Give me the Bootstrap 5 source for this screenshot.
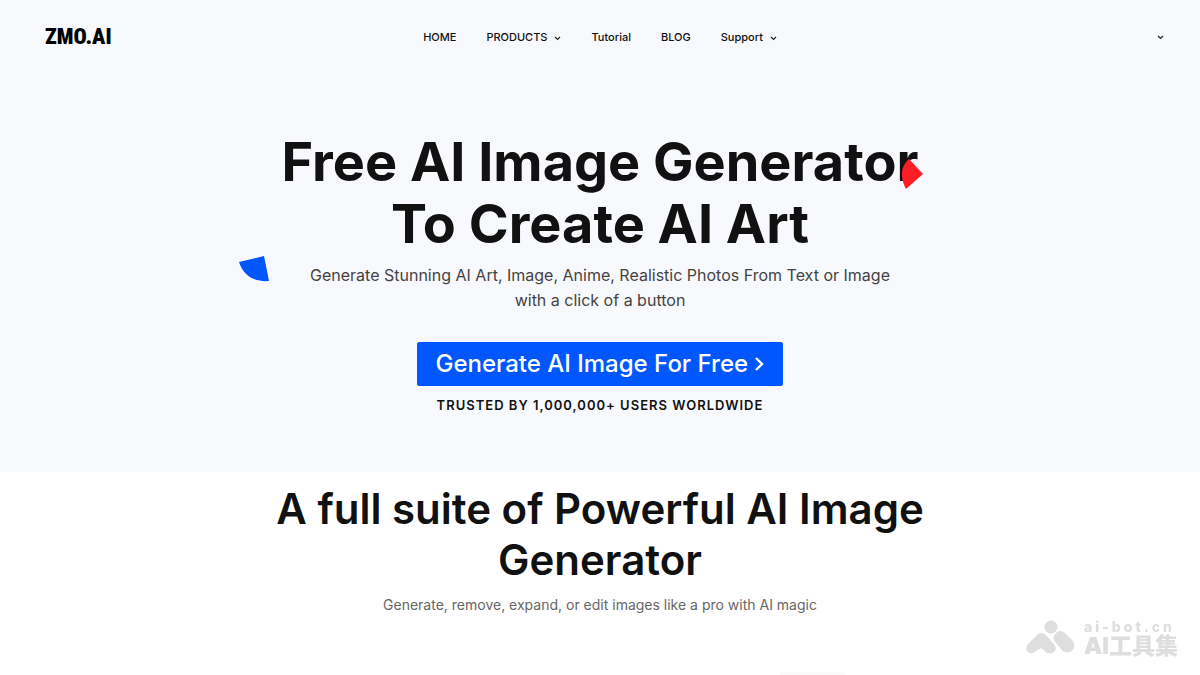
<!DOCTYPE html>
<html lang="en">
<head>
<meta charset="utf-8">
<meta name="viewport" content="width=device-width, initial-scale=1">
<title>ZMO.AI</title>
<link href="https://cdn.jsdelivr.net/npm/bootstrap@5.3.0/dist/css/bootstrap.min.css" rel="stylesheet">
<style>
  body { font-family: Inter, "Liberation Sans", sans-serif; color: #111; background: #fff; overflow-x: hidden; }
  .hero { background: #f8f9fd; padding-bottom: 58px; }
  .topbar { --bs-navbar-nav-link-padding-x: 0; height: 74px; padding: 0 36px; }
  .topbar .side { flex: 1 1 0; }
  .topbar .navbar-nav { gap: 30px; }
  .topbar .nav-link { font-size: 11px; line-height: 16px; font-weight: 500; color: #111; padding-top: 0; padding-bottom: 0; }
  .brand { margin-left: 9px; font-family: "Roboto Condensed", Roboto, sans-serif; font-size: 22px; line-height: 32px; font-weight: 900; color: #000; text-decoration: none; }
  .chevron { width: 7px; height: 5px; margin-left: 7px; fill: none; stroke: #222; stroke-width: 1.2; }
  .lang { line-height: 0; }
  .headline { position: relative; margin: 57px auto 0; font-size: 54px; line-height: 62px; font-weight: 700; width: fit-content; }
  .wedge { position: absolute; }
  .wedge-red { width: 22px; height: 30px; right: -4px; top: 28px; }
  .wedge-blue { width: 30px; height: 26px; left: -42px; bottom: -27px; }
  .intro { font-size: 16px; line-height: 25px; color: #444; margin: 8px 0 29px; }
  .cta { font-size: 24px; line-height: 28px; font-weight: 500; padding: 7px 17px; border-radius: 2px; background: #0057ff; border-color: #0057ff; color: #fff; }
  .trusted { font-size: 13px; line-height: 18px; font-weight: 600; letter-spacing: 1px; margin: 10px 0 0; }
  .suite { padding-top: 11px; }
  .suite h2 { font-size: 42px; line-height: 51px; font-weight: 600; margin: 0; }
  .suite p { font-size: 14px; line-height: 20px; color: #666; margin: 10px 0 0; }
  .next-shadow { width: 66px; height: 3px; margin: 57px 0 0 426px; border-radius: 50% 50% 0 0; background: #f9f9f9; }
  .watermark { position: fixed; right: 22px; bottom: 17px; gap: 9px; color: #dedede; }
  .watermark svg { width: 49px; height: 34px; fill: #dedede; }
  .wm-site { font-size: 14px; line-height: 14px; font-weight: 800; letter-spacing: 3px; }
  .wm-name { font-family: Inter, "Noto Sans CJK SC", sans-serif; font-size: 23px; line-height: 24px; font-weight: 900; }
</style>
</head>
<body>
<header class="hero">
  <nav class="topbar navbar navbar-expand d-flex flex-nowrap">
    <div class="side"><a class="brand" href="#">ZMO.AI</a></div>
    <ul class="navbar-nav">
      <li><a class="nav-link" href="#">HOME</a></li>
      <li><a class="nav-link" href="#">PRODUCTS<svg class="chevron" viewBox="0 0 7 5"><path d="m1 1 2.500 2.500L6 1"/></svg></a></li>
      <li><a class="nav-link" href="#">Tutorial</a></li>
      <li><a class="nav-link" href="#">BLOG</a></li>
      <li><a class="nav-link" href="#">Support<svg class="chevron" viewBox="0 0 7 5"><path d="m1 1 2.500 2.500L6 1"/></svg></a></li>
    </ul>
    <div class="side d-flex justify-content-end"><button class="lang btn p-0 border-0" type="button" aria-label="Language"><svg class="chevron" viewBox="0 0 7 5"><path d="m1 1 2.500 2.500L6 1"/></svg></button></div>
  </nav>
  <div class="container text-center">
    <h1 class="headline">Free AI Image Generator<br>To Create AI Art
      <svg class="wedge wedge-red" viewBox="0 0 22 30"><path d="M8 0 22 15 5 30C0 20-2 9 8 0Z" fill="#ff1d25"/></svg>
      <svg class="wedge wedge-blue" viewBox="0 0 30 26"><path d="M0 6 25 0 30 25C18 26 5 22 0 6Z" fill="#0057ff"/></svg>
    </h1>
    <p class="intro">Generate Stunning AI Art, Image, Anime, Realistic Photos From Text or Image<br>with a click of a button</p>
    <button class="cta btn" type="button">Generate AI Image For Free <svg width="10" height="16" viewBox="0 0 10 16" fill="none" stroke="#fff" stroke-width="2.400"><path d="m1 1 6 6-6 6"/></svg></button>
    <p class="trusted">TRUSTED BY 1,000,000+ USERS WORLDWIDE</p>
  </div>
</header>
<main class="suite container text-center">
  <h2>A full suite of Powerful AI Image<br>Generator</h2>
  <p>Generate, remove, expand, or edit images like a pro with AI magic</p>
  <div class="row justify-content-center"><div class="next-shadow"></div></div>
</main>
<aside class="watermark d-flex align-items-start">
  <svg viewBox="0 0 49 34"><circle cx="25" cy="7" r="6.500"/><path d="M2 24 11 15Q15 11 20 15L28 24C34 31 24 37 19 31L15 28 10 31C4 37-3 30 2 24ZM30 13Q34 9 39 13L46 20C53 28 42 37 36 30L30 23Q25 18 30 13Z"/></svg>
  <div><div class="wm-site">ai-bot.cn</div><div class="wm-name">AI工具集</div></div>
</aside>
<script src="https://cdn.jsdelivr.net/npm/bootstrap@5.3.0/dist/js/bootstrap.bundle.min.js"></script>
</body>
</html>
